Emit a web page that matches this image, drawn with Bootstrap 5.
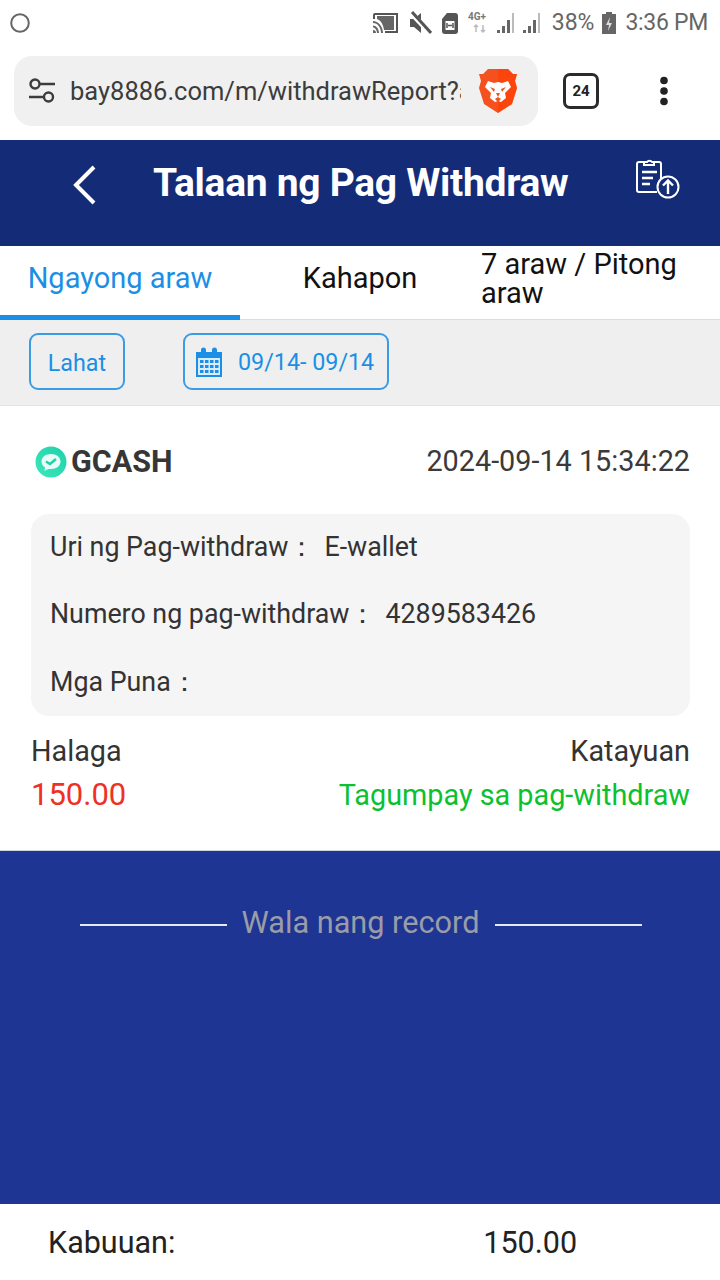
<!doctype html>
<html lang="en">
<head>
  <meta charset="utf-8">
  <title>Talaan ng Pag Withdraw</title>
  <meta name="viewport" content="width=device-width, initial-scale=1">
  <link href="https://cdn.jsdelivr.net/npm/bootstrap@5.3.3/dist/css/bootstrap.min.css" rel="stylesheet">
  <style>
    html, body { height: 100%; }
    body { width: 720px; height: 1280px; overflow: hidden; font-family: Roboto, "Liberation Sans", sans-serif; color: #333; background: #fff; }
    .screen { height: 1280px; }
    .status-bar { height: 44px; padding: 2px 12px 0 10px; color: #666; font-size: 23px; }
    .status-bar .clock { letter-spacing: -.3px; margin-left: 8px; }
    .status-bar .batt { margin-left: 7px; }
    .browser-bar { height: 96px; padding: 12px 0 14px 14px; }
    .url-box { width: 524px; height: 70px; background: #f0f0f0; border-radius: 18px; padding: 0 20px 0 14px; }
    .url-text { width: 391px; margin-left: 14px; overflow: hidden; white-space: nowrap; font-size: 25.500px; color: #3c3c3c; }
    .tab-count { width: 36px; height: 36px; border: 3px solid #2b2b2b; border-radius: 7px; font-size: 15px; font-weight: 700; color: #222; margin-left: 25px; }
    .more-dots { margin-left: 60px; }
    .app-head { height: 106px; background: #142c78; color: #fff; padding-top: 18px; }
    .back-icon { margin-left: 72px; margin-top: 7px; }
    .app-title { width: 415px; margin: 0 0 0 55px; font-size: 39px; line-height: 50px; font-weight: 700; white-space: nowrap; letter-spacing: -.3px; }
    .upload-icon { margin-left: 68px; margin-top: -1px; }
    .tab-row { height: 74px; border-bottom: 1px solid #ddd; }
    .tab-item { width: 240px; height: 74px; font-size: 29px; line-height: 29px; color: #111; padding-bottom: 10px; }
    .tab-item.active-tab { color: #1b8fe6; border-bottom: 5px solid #1b8fe6; padding-bottom: 5px; }
    .tab-item.tab-wrap { padding-left: 1px; padding-bottom: 8px; justify-content: flex-start !important; }
    .filter-row { height: 86px; background: #efefef; border-bottom: 1px solid #e4e4e4; padding: 13px 0 0 29px; }
    .filter-btn { height: 57px; border: 2px solid #3b9ce4; border-radius: 9px; color: #1b8fe6; font-size: 23.300px; }
    .filter-all { width: 96px; padding-top: 3px; }
    .filter-date { width: 206px; margin-left: 58px; padding-left: 11px; }
    .filter-date span { margin-left: 16px; padding-top: 1px; }
    .record { height: 444px; padding: 0 30px 0 31px; font-size: 26.800px; }
    .record-top { height: 108px; padding-top: 3px; }
    .gcash-name { font-size: 30.500px; font-weight: 700; color: #363636; margin-left: 4px; }
    .record-time { font-size: 28.800px; color: #3a3a3a; }
    .info-box { height: 202px; background: #f5f5f5; border-radius: 18px; padding: 0 19px; }
    .info-line { height: 67.500px; padding-bottom: 2px; }
    .info-line b { font-weight: 400; margin-left: 9px; }
    .record-foot { margin-top: 13px; line-height: 44px; font-size: 28.800px; }
    .amount { color: #ee3124; font-size: 31px; }
    .status-ok { color: #0cc02f; }
    .blue-area { height: 354px; background: #1e3594; border-top: 1px solid #cfd4e4; padding: 50px 0 0 1px; }
    .end-line { width: 147px; height: 2px; background: #e6e8f0; margin-top: 4px; }
    .end-text { font-size: 30.700px; line-height: 44px; color: #9a9ca8; margin: 0 15px; }
    .total-row { height: 76px; font-size: 30.500px; color: #222; padding: 2px 0 0 48px; }
    .total-value { margin-left: 308px; }
  </style>
</head>
<body>
<div class="screen d-flex flex-column">

  <!-- status bar -->
  <div class="status-bar d-flex align-items-center justify-content-between">
    <svg width="20" height="20" viewBox="0 0 20 20"><circle cx="10" cy="10" r="8.800" fill="none" stroke="#666" stroke-width="2"/></svg>
    <div class="d-flex align-items-center">
      <svg width="28" height="24" viewBox="0 0 28 24"><path d="M5 2h21v20H13V20h11V4H3v4H1V4a2 2 0 0 1 2-2z" fill="#555"/><path d="M5 5h17v14H12C11 12 8 9 5 8z" fill="#666"/><path d="M1 10c5 0 10 5 10 12H9c0-5-3-10-8-10zM1 14.500c3 0 6 3 6 7.500H5c0-3-2-5.500-4-5.500zM1 19a3 3 0 0 1 3 3H1z" fill="#666"/></svg>
      <svg width="24" height="24" viewBox="0 0 24 24" class="ms-2"><path d="M2 8h4l7-6v20l-7-6H2z" fill="#555"/><path d="M3 2l19 20" stroke="#fff" stroke-width="5"/><path d="M4 1l19 21" stroke="#555" stroke-width="3"/></svg>
      <svg width="20" height="24" viewBox="0 0 20 24" class="ms-2"><path d="M7 2h8a3 3 0 0 1 3 3v15a3 3 0 0 1-3 3H5a3 3 0 0 1-3-3V8z" fill="#555"/><rect x="5.500" y="10" width="9" height="9" fill="#fff"/><path d="M7 12v5M13 12v5M8 14.500h4" stroke="#555" stroke-width="1.500"/></svg>
      <svg width="24" height="24" viewBox="0 0 24 24" class="ms-2"><text x="0" y="9" font-family="Roboto" font-weight="700" font-size="10" fill="#777">4G+</text><path d="M8 14v7M6 16l2-2 2 2M15 21v-7M13 19l2 2 2-2" stroke="#bbb" stroke-width="1.500" fill="none"/></svg>
      <svg width="22" height="24" viewBox="0 0 22 24" class="ms-1"><path d="M1 22h3v-3H1zM6 22h3v-7H6zM11 22h3V9h-3z" fill="#666"/><path d="M16 22h2V2h-2z" fill="#bbb"/></svg>
      <svg width="22" height="24" viewBox="0 0 22 24" class="ms-1"><path d="M1 22h3v-3H1zM6 22h3v-7H6zM11 22h3V9h-3z" fill="#666"/><path d="M16 22h2V2h-2z" fill="#bbb"/></svg>
      <span class="ms-2">38%</span>
      <svg width="16" height="24" viewBox="0 0 16 24" class="batt"><path d="M5 1h6v2h4v20H1V3h4z" fill="#666"/><path d="M9 6l-4 8h3l-1 6 4-8H8z" fill="#ddd"/></svg>
      <span class="clock">3:36 PM</span>
    </div>
  </div>

  <!-- browser bar -->
  <div class="browser-bar d-flex align-items-center">
    <div class="url-box d-flex align-items-center">
      <svg width="28" height="28" viewBox="0 0 28 28"><g fill="none" stroke="#3c3c3c" stroke-width="2.400"><circle cx="7" cy="7" r="4.500"/><path d="M12 7h15M1 20h15"/><circle cx="20.500" cy="20" r="4.500"/></g></svg>
      <div class="url-text">bay8886.com/m/withdrawReport?a</div>
      <svg width="40" height="46" viewBox="0 0 40 46" class="ms-auto"><path d="M10 1h20l5 5 4 0-2 7 2 7-5 16-14 9-14-9-5-16 2-7-2-7 4 0z" fill="#f4511e"/><path d="M20 1h10l5 5 4 0-2 7 2 7-5 16-14 9z" fill="#ff3d00" opacity=".6"/><path d="M10 13l6 2 4-1 4 1 6-2 3 6-6 6 1 5-5 4-3-1-3 1-5-4 1-5-6-6z" fill="#fff"/><path d="M12 19l5 2-1 3zM28 19l-5 2 1 3zM17 31l3-2 3 2-3 3zM18 25h4l-2 4z" fill="#f4511e"/></svg>
    </div>
    <div class="tab-count d-flex align-items-center justify-content-center flex-shrink-0">24</div>
    <svg width="10" height="30" viewBox="0 0 10 30" class="more-dots flex-shrink-0"><circle cx="5" cy="4.500" r="3.800" fill="#222"/><circle cx="5" cy="15" r="3.800" fill="#222"/><circle cx="5" cy="25.500" r="3.800" fill="#222"/></svg>
  </div>

  <!-- page header -->
  <div class="app-head d-flex align-items-start">
    <svg width="26" height="40" viewBox="0 0 26 40" class="back-icon flex-shrink-0"><path d="M22 2L4 20l18 18" fill="none" stroke="#fff" stroke-width="4"/></svg>
    <h1 class="app-title">Talaan ng Pag Withdraw</h1>
    <svg width="44" height="44" viewBox="0 0 44 44" class="upload-icon flex-shrink-0"><g fill="none" stroke="#fff" stroke-width="2"><path d="M8 5H3a2 2 0 0 0-2 2v26a2 2 0 0 0 2 2h18M25 22V7a2 2 0 0 0-2-2h-5"/><path d="M8 8V5h3a3 3 0 0 1 5 0h2v3z"/><path d="M6 15h15M6 21h11M6 27h8" stroke-width="2.400"/><circle cx="32" cy="30" r="10.500"/><path d="M32 37V24M27 28.500l5-5 5 5" stroke-width="2.400"/></g></svg>
  </div>

  <!-- tabs -->
  <div class="tab-row d-flex">
    <div class="tab-item active-tab d-flex align-items-center justify-content-center">Ngayong araw</div>
    <div class="tab-item d-flex align-items-center justify-content-center">Kahapon</div>
    <div class="tab-item tab-wrap d-flex align-items-center">7 araw / Pitong araw</div>
  </div>

  <!-- filters -->
  <div class="filter-row d-flex align-items-start">
    <div class="filter-btn filter-all d-flex align-items-center justify-content-center">Lahat</div>
    <div class="filter-btn filter-date d-flex align-items-center">
      <svg width="26" height="30" viewBox="0 0 26 30"><path d="M0 5h5V3a2.500 2.500 0 0 1 5 0v2h6V3a2.500 2.500 0 0 1 5 0v2h5v25H0z" fill="#1b8fe6"/><path d="M2 11h22v17H2z" fill="#d8ecfb"/><g fill="#1b8fe6"><rect x="4" y="13" width="3.500" height="3"/><rect x="9" y="13" width="3.500" height="3"/><rect x="14" y="13" width="3.500" height="3"/><rect x="19" y="13" width="3.500" height="3"/><rect x="4" y="18" width="3.500" height="3"/><rect x="9" y="18" width="3.500" height="3"/><rect x="14" y="18" width="3.500" height="3"/><rect x="19" y="18" width="3.500" height="3"/><rect x="4" y="23" width="3.500" height="3"/><rect x="9" y="23" width="3.500" height="3"/><rect x="14" y="23" width="3.500" height="3"/><rect x="19" y="23" width="3.500" height="3"/></g></svg>
      <span>09/14- 09/14</span>
    </div>
  </div>

  <!-- record -->
  <div class="record">
    <div class="record-top d-flex align-items-center justify-content-between">
      <div class="d-flex align-items-center ms-1">
        <svg width="32" height="32" viewBox="0 0 32 32"><defs><linearGradient id="gc" x1="0" y1="1" x2="1" y2="0"><stop offset="0" stop-color="#3ce8bc"/><stop offset="1" stop-color="#1fd0a8"/></linearGradient></defs><circle cx="16" cy="16" r="15.500" fill="url(#gc)"/><path d="M16 8c5.500 0 9.500 3 9.500 7.500S21.500 23 16 23c-1.500 0-2.500 0-4 .5l-2.500 1.500.5-3.500c-2-1.500-3.500-3.500-3.500-6C6.500 11 10.500 8 16 8z" fill="#e9fbf6"/><path d="M11 15.500l4 2.500 6-5" fill="none" stroke="#1fd0a8" stroke-width="2.400"/></svg>
        <span class="gcash-name">GCASH</span>
      </div>
      <div class="record-time">2024-09-14 15:34:22</div>
    </div>
    <div class="info-box">
      <div class="info-line d-flex align-items-center">Uri ng Pag-withdraw：<b>E-wallet</b></div>
      <div class="info-line d-flex align-items-center">Numero ng pag-withdraw：<b>4289583426</b></div>
      <div class="info-line d-flex align-items-center">Mga Puna：</div>
    </div>
    <div class="record-foot d-flex justify-content-between">
      <div>
        <div>Halaga</div>
        <div class="amount">150.00</div>
      </div>
      <div class="text-end">
        <div>Katayuan</div>
        <div class="status-ok">Tagumpay sa pag-withdraw</div>
      </div>
    </div>
  </div>

  <!-- end of list -->
  <div class="blue-area">
    <div class="d-flex align-items-center justify-content-center">
      <div class="end-line"></div>
      <div class="end-text">Wala nang record</div>
      <div class="end-line"></div>
    </div>
  </div>

  <!-- total -->
  <div class="total-row d-flex align-items-center">
    <div>Kabuuan:</div>
    <div class="total-value">150.00</div>
  </div>

</div>
<script src="https://cdn.jsdelivr.net/npm/bootstrap@5.3.3/dist/js/bootstrap.bundle.min.js"></script>
</body>
</html>
